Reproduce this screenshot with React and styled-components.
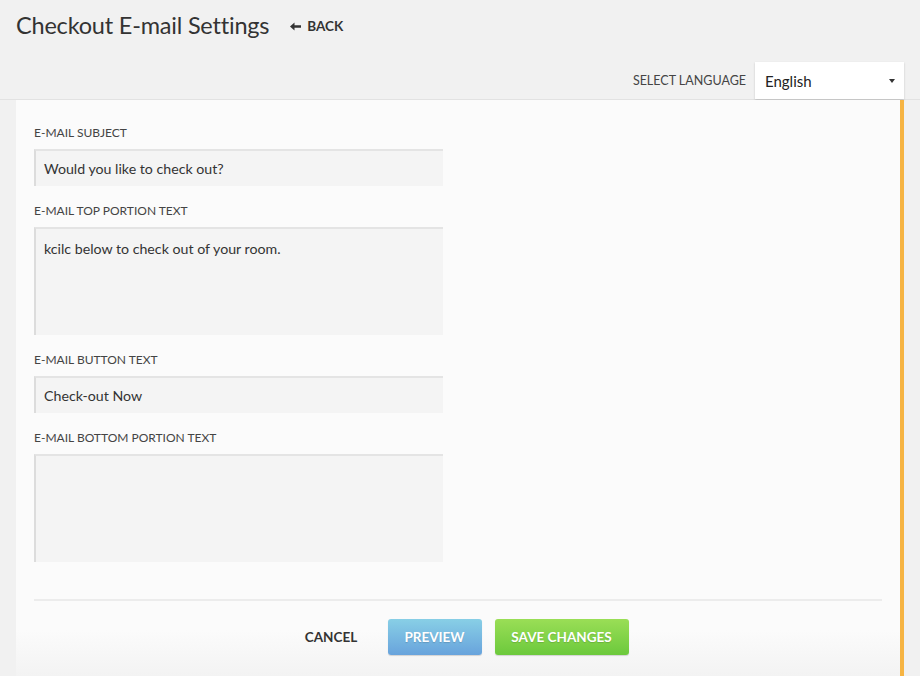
import React from "react";
import styled, { createGlobalStyle } from "styled-components";

const GlobalStyle = createGlobalStyle`
  html, body {
    margin: 0;
    padding: 0;
    background: #f1f1f1;
    font-family: "Source Sans Pro", Lato, "Noto Sans", sans-serif;
    color: #333;
  }
  * { box-sizing: border-box; }
`;

const Page = styled.div`
  width: 920px;
  height: 676px;
  overflow: hidden;
  display: flex;
  flex-direction: column;
`;

const Header = styled.div`
  display: flex;
  align-items: center;
  height: 50px;
  padding: 0 16px;
`;

const Title = styled.h1`
  margin: 0;
  font-size: 23.5px;
  font-weight: 400;
  color: #333;
  letter-spacing: -0.2px;
`;

const Back = styled.a`
  display: flex;
  align-items: center;
  gap: 6px;
  margin-left: 21px;
  margin-top: 2px;
  font-size: 13.5px;
  font-weight: 700;
  color: #333;
  text-transform: uppercase;
  cursor: pointer;
`;

const LangBar = styled.div`
  display: flex;
  justify-content: flex-end;
  align-items: center;
  gap: 9px;
  padding: 12px 16px 0 0;
  border-bottom: 1px solid #e2e2e2;
`;

const LangLabel = styled.span`
  font-size: 12.5px;
  color: #444;
  text-transform: uppercase;
`;

const SelectBox = styled.div`
  width: 149px;
  height: 37px;
  display: flex;
  align-items: center;
  justify-content: space-between;
  padding: 0 9px 0 10px;
  background: #fff;
  box-shadow: 0 1px 2px rgba(0, 0, 0, 0.18);
  font-size: 15px;
  color: #222;
`;

const Caret = styled.span`
  width: 0;
  height: 0;
  border-left: 3px solid transparent;
  border-right: 3px solid transparent;
  border-top: 4px solid #333;
`;

const Panel = styled.div`
  flex: 1;
  margin: 0 16px;
  padding: 25px 18px 0;
  background: linear-gradient(#fbfbfb 0, #fbfbfb 92%, #f3f3f3 100%);
  border-right: 4px solid #f6b443;
  display: flex;
  flex-direction: column;
`;

const Fields = styled.div`
  display: flex;
  flex-direction: column;
  gap: 17px;
`;

const Field = styled.div`
  display: flex;
  flex-direction: column;
  gap: 8px;
`;

const Label = styled.label`
  font-size: 12px;
  line-height: 16px;
  color: #444;
  text-transform: uppercase;
`;

const Input = styled.div`
  width: 409px;
  height: ${({ tall }) => (tall ? "108px" : "37px")};
  padding: ${({ tall }) => (tall ? "11px 8px" : "0 8px")};
  display: flex;
  align-items: ${({ tall }) => (tall ? "flex-start" : "center")};
  background: #f4f4f4;
  border-top: 2px solid #e4e4e4;
  border-left: 2px solid #dcdcdc;
  font-size: 14.2px;
  color: #333;
`;

const Divider = styled.div`
  height: 2px;
  background: #ececec;
  margin-top: 37px;
`;

const Actions = styled.div`
  display: flex;
  justify-content: center;
  gap: 13px;
  padding-top: 18px;
`;

const Button = styled.button`
  height: 36px;
  width: ${({ w }) => w}px;
  border: none;
  border-radius: 3px;
  font-family: inherit;
  font-size: 13.5px;
  font-weight: 700;
  text-transform: uppercase;
  cursor: pointer;
  color: ${({ variant }) => (variant === "plain" ? "#333" : "#fff")};
  text-shadow: ${({ variant }) =>
    variant === "plain" ? "none" : "0 1px 1px rgba(0,0,0,0.15)"};
  background: ${({ variant }) =>
    variant === "preview"
      ? "linear-gradient(#88cfe6, #68a3dc)"
      : variant === "save"
      ? "linear-gradient(#9ade56, #6cc93c)"
      : "transparent"};
  box-shadow: ${({ variant }) =>
    variant === "plain" ? "none" : "0 1px 1px rgba(0,0,0,0.15)"};
`;

const fields = [
  { label: "E-mail Subject", value: "Would you like to check out?" },
  { label: "E-mail Top Portion Text", value: "kcilc below to check out of your room.", tall: true },
  { label: "E-mail Button Text", value: "Check-out Now" },
  { label: "E-mail Bottom Portion Text", value: "", tall: true },
];

const App = () => {
  return (
    <Page>
      <GlobalStyle />
      <Header>
        <Title>Checkout E-mail Settings</Title>
        <Back>
          <svg width="11" height="9" viewBox="0 0 11 9">
            <path d="M0 4.5 L4.5 0.5 V3.3 H11 V5.7 H4.5 V8.5 Z" fill="#333" />
          </svg>
          Back
        </Back>
      </Header>
      <LangBar>
        <LangLabel>Select Language</LangLabel>
        <SelectBox>
          English
          <Caret />
        </SelectBox>
      </LangBar>
      <Panel>
        <Fields>
          {fields.map((f, i) => (
            <Field key={i}>
              <Label>{f.label}</Label>
              <Input tall={f.tall}>{f.value}</Input>
            </Field>
          ))}
        </Fields>
        <Divider />
        <Actions>
          <Button variant="plain" w={87}>Cancel</Button>
          <Button variant="preview" w={94}>Preview</Button>
          <Button variant="save" w={134}>Save Changes</Button>
        </Actions>
      </Panel>
    </Page>
  );
};

export default App;
